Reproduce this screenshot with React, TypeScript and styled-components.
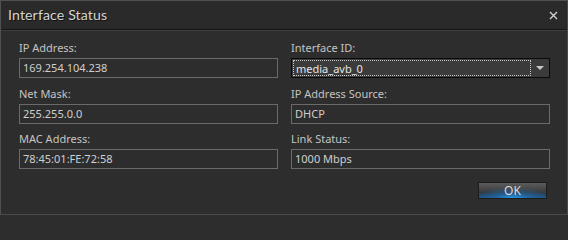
import React from "react";
import styled, { createGlobalStyle } from "styled-components";

const Global = createGlobalStyle`
  html, body { margin: 0; padding: 0; background: #2d2d2d; }
  * { box-sizing: border-box; }
`;

const Dialog = styled.div`
  width: 568px;
  height: 215px;
  background: #2d2d2d;
  border: 1px solid #505050;
  border-right-color: #4a4a4a;
  border-bottom-color: #4a4a4a;
  font-family: "Noto Sans", "DejaVu Sans", sans-serif;
  color: #c8c8c8;
  display: flex;
  flex-direction: column;
`;

const TitleBar = styled.div`
  height: 29px;
  flex: none;
  display: flex;
  align-items: center;
  justify-content: space-between;
  padding: 0 9px 0 7px;
  background: #2a2a2a;
  border-bottom: 1px solid #161616;
  box-shadow: 0 1px 0 #3e3e3e;
`;

const Title = styled.div`
  font-family: Lato, "Noto Sans", sans-serif;
  font-size: 14.2px;
  color: #d4d4d4;
  letter-spacing: 0.1px;
  text-shadow: 1px 1px 0 #111;
  padding-bottom: 1px;
`;

const Close = styled.div`
  width: 10px;
  height: 10px;
  display: flex;
  align-items: center;
  justify-content: center;
  margin-top: 1px;
`;

const Body = styled.div`
  flex: 1;
  display: flex;
  flex-direction: column;
  padding: 10px 17px 0 18px;
`;

const Columns = styled.div`
  display: grid;
  grid-template-columns: 259px 259px;
  column-gap: 13px;
`;

const Column = styled.div`
  display: flex;
  flex-direction: column;
  gap: 7.5px;
`;

const Field = styled.div`
  display: flex;
  flex-direction: column;
`;

const Label = styled.div`
  font-size: 11px;
  line-height: 15px;
  height: 15px;
  margin-bottom: 3px;
  color: #c4c4c4;
`;

const Box = styled.div`
  height: 20px;
  border: 1px solid #6a6a6a;
  background: #2d2d2d;
  font-size: 11px;
  line-height: 18px;
  padding-left: 3px;
  color: #cfcfcf;
`;

const Select = styled.div`
  height: 20px;
  border: 1px solid #0a0a0a;
  background: #3b3b3b;
  display: flex;
  align-items: center;
  padding: 1px;
`;

const Focus = styled.div`
  flex: 1;
  height: 100%;
  border: 1px dotted #c8c8c8;
  font-size: 11px;
  line-height: 15px;
  padding-left: 2px;
  color: #e4e4e4;
`;

const Arrow = styled.div`
  width: 17px;
  display: flex;
  align-items: center;
  justify-content: center;
`;

const Footer = styled.div`
  display: flex;
  justify-content: flex-end;
  padding-right: 3px;
  margin-top: 13px;
`;

const Button = styled.div`
  width: 69px;
  height: 17px;
  border: 1px solid #1c1c1c;
  background: radial-gradient(
      ellipse 60% 70% at 50% 100%,
      rgba(40, 150, 230, 0.95) 0%,
      rgba(30, 110, 180, 0.6) 45%,
      rgba(30, 80, 130, 0) 100%
    ),
    linear-gradient(to bottom, #5c5c5c 0%, #474747 40%, #33383d 65%, #1d5282 100%);
  color: #dadada;
  font-size: 12px;
  line-height: 16px;
  text-align: center;
`;

export default function App() {
  return (
    <>
      <Global />
      <Dialog>
        <TitleBar>
          <Title>Interface Status</Title>
          <Close>
            <svg width="9" height="9" viewBox="0 0 9 9">
              <path d="M1 1 L8 8 M8 1 L1 8" stroke="#d0d0d0" strokeWidth="1.4" />
            </svg>
          </Close>
        </TitleBar>
        <Body>
          <Columns>
            <Column>
              <Field>
                <Label>IP Address:</Label>
                <Box>169.254.104.238</Box>
              </Field>
              <Field>
                <Label>Net Mask:</Label>
                <Box>255.255.0.0</Box>
              </Field>
              <Field>
                <Label>MAC Address:</Label>
                <Box>78:45:01:FE:72:58</Box>
              </Field>
            </Column>
            <Column>
              <Field>
                <Label>Interface ID:</Label>
                <Select>
                  <Focus>media_avb_0</Focus>
                  <Arrow>
                    <svg width="8" height="4" viewBox="0 0 8 4">
                      <path d="M0 0 H8 L4 4 Z" fill="#c8c8c8" />
                    </svg>
                  </Arrow>
                </Select>
              </Field>
              <Field>
                <Label>IP Address Source:</Label>
                <Box>DHCP</Box>
              </Field>
              <Field>
                <Label>Link Status:</Label>
                <Box>1000 Mbps</Box>
              </Field>
            </Column>
          </Columns>
          <Footer>
            <Button>OK</Button>
          </Footer>
        </Body>
      </Dialog>
    </>
  );
}
